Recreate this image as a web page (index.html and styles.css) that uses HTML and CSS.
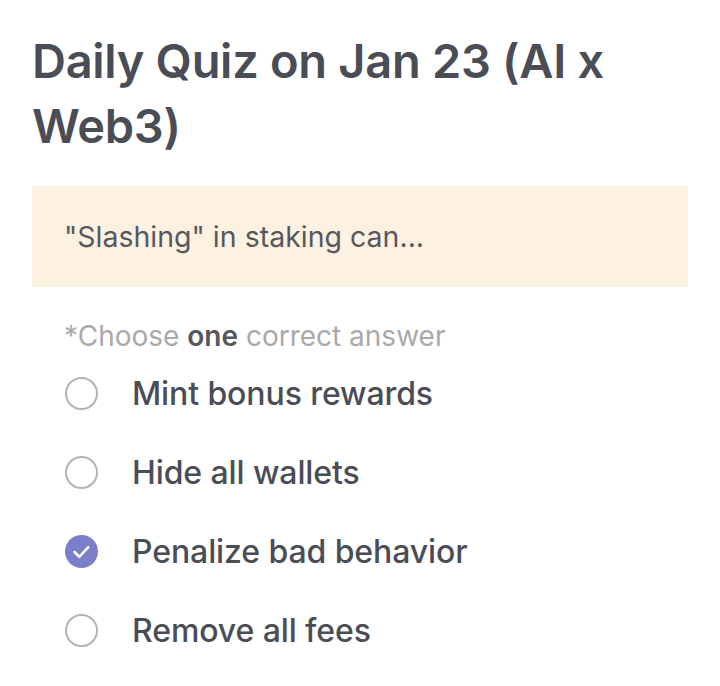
FILE: index.html
```html
<!DOCTYPE html>
<html>
<head>
<meta charset="utf-8">
<link rel="stylesheet" href="styles.css">
</head>
<body>
<main class="quiz">
  <h1 class="title">Daily Quiz on Jan 23 (AI x Web3)</h1>
  <div class="question">"Slashing" in staking can...</div>
  <p class="hint">*Choose <b>one</b> correct answer</p>
  <ul class="options">
    <li class="option"><span class="radio"></span><span class="label">Mint bonus rewards</span></li>
    <li class="option"><span class="radio"></span><span class="label">Hide all wallets</span></li>
    <li class="option"><span class="radio checked"><svg viewBox="0 0 33 33" width="33" height="33"><path d="M9.5 17l4.8 4.8 9-9.6" fill="none" stroke="#fff" stroke-width="2.6" stroke-linecap="round" stroke-linejoin="round"/></svg></span><span class="label">Penalize bad behavior</span></li>
    <li class="option"><span class="radio"></span><span class="label">Remove all fees</span></li>
  </ul>
</main>
</body>
</html>
```
FILE: styles.css
```css
* { box-sizing: border-box; }
html, body { margin: 0; padding: 0; background: #fff; }
body { font-family: Inter, "Noto Sans", sans-serif; color: #4b4e56; }
.quiz { padding: 28px 32px 0 32px; }
.title {
  margin: 0 0 28px 0;
  font-size: 47px;
  line-height: 65px;
  font-weight: 600;
  color: #4a4d55;
  letter-spacing: -0.3px;
  width: 610px;
}
.question {
  background: #fdf2e2;
  height: 101px;
  padding: 0 32px;
  display: flex;
  align-items: center;
  font-size: 28.5px;
  font-weight: 400;
  color: #57585d;
}
.hint {
  margin: 31px 0 0 32px;
  font-size: 28px;
  line-height: 36px;
  color: #a9a9ab;
}
.hint b { color: #55575d; font-weight: 600; }
.options { list-style: none; margin: 0; padding: 0 0 0 33px; }
.option {
  display: flex;
  align-items: center;
  height: 79px;
  gap: 34px;
  font-size: 32px;
  font-weight: 500;
  color: #4a4d55;
  letter-spacing: -0.1px;
}
.radio {
  width: 33px;
  height: 33px;
  border-radius: 50%;
  border: 2.5px solid #b3b3b5;
  flex: none;
  display: flex;
  align-items: center;
  justify-content: center;
}
.radio.checked { border: none; background: #7b7ec9; }
```
